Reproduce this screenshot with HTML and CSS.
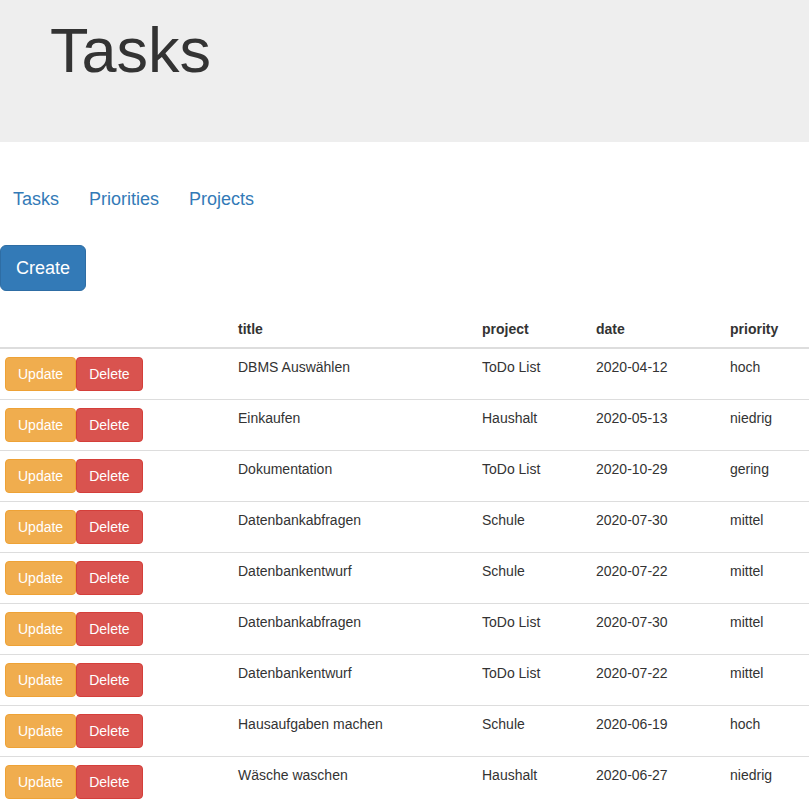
FILE: index.html
```html
<!DOCTYPE html>
<html lang="de">
<head>
<meta charset="utf-8">
<title>Tasks</title>
<link rel="stylesheet" href="styles.css">
</head>
<body>
<div class="jumbotron">
  <h1>Tasks</h1>
</div>
<nav class="nav">
  <a href="#">Tasks</a>
  <a href="#">Priorities</a>
  <a href="#">Projects</a>
</nav>
<div class="actions">
  <button class="btn btn-lg btn-primary">Create</button>
</div>
<table class="table">
  <colgroup>
    <col class="c-act"><col class="c-title"><col class="c-proj"><col class="c-date"><col class="c-prio">
  </colgroup>
  <thead>
    <tr><th></th><th>title</th><th>project</th><th>date</th><th>priority</th></tr>
  </thead>
  <tbody>
    <tr><td class="act"><div class="btns"><button class="btn btn-warning">Update</button><button class="btn btn-danger">Delete</button></div></td><td>DBMS Auswählen</td><td>ToDo List</td><td>2020-04-12</td><td>hoch</td></tr>
    <tr><td class="act"><div class="btns"><button class="btn btn-warning">Update</button><button class="btn btn-danger">Delete</button></div></td><td>Einkaufen</td><td>Haushalt</td><td>2020-05-13</td><td>niedrig</td></tr>
    <tr><td class="act"><div class="btns"><button class="btn btn-warning">Update</button><button class="btn btn-danger">Delete</button></div></td><td>Dokumentation</td><td>ToDo List</td><td>2020-10-29</td><td>gering</td></tr>
    <tr><td class="act"><div class="btns"><button class="btn btn-warning">Update</button><button class="btn btn-danger">Delete</button></div></td><td>Datenbankabfragen</td><td>Schule</td><td>2020-07-30</td><td>mittel</td></tr>
    <tr><td class="act"><div class="btns"><button class="btn btn-warning">Update</button><button class="btn btn-danger">Delete</button></div></td><td>Datenbankentwurf</td><td>Schule</td><td>2020-07-22</td><td>mittel</td></tr>
    <tr><td class="act"><div class="btns"><button class="btn btn-warning">Update</button><button class="btn btn-danger">Delete</button></div></td><td>Datenbankabfragen</td><td>ToDo List</td><td>2020-07-30</td><td>mittel</td></tr>
    <tr><td class="act"><div class="btns"><button class="btn btn-warning">Update</button><button class="btn btn-danger">Delete</button></div></td><td>Datenbankentwurf</td><td>ToDo List</td><td>2020-07-22</td><td>mittel</td></tr>
    <tr><td class="act"><div class="btns"><button class="btn btn-warning">Update</button><button class="btn btn-danger">Delete</button></div></td><td>Hausaufgaben machen</td><td>Schule</td><td>2020-06-19</td><td>hoch</td></tr>
    <tr><td class="act"><div class="btns"><button class="btn btn-warning">Update</button><button class="btn btn-danger">Delete</button></div></td><td>Wäsche waschen</td><td>Haushalt</td><td>2020-06-27</td><td>niedrig</td></tr>
  </tbody>
</table>
</body>
</html>
```

FILE: styles.css
```css
* { box-sizing: border-box; }
html, body { margin: 0; padding: 0; }
body {
  font-family: "Liberation Sans", Arial, sans-serif;
  font-size: 14px;
  line-height: 20px;
  color: #333;
  background: #fff;
  width: 809px;
  overflow: hidden;
}
.jumbotron {
  background: #eee;
  padding: 16px 50px 57px;
}
.jumbotron h1 {
  margin: 0;
  font-size: 63px;
  line-height: 69px;
  font-weight: 400;
  color: #333;
}
.nav {
  display: flex;
  gap: 30px;
  margin-top: 47px;
  padding-left: 13px;
}
.nav a {
  font-size: 18px;
  line-height: 20px;
  color: #337ab7;
  text-decoration: none;
}
.actions {
  margin-top: 36px;
  display: flex;
}
.btn {
  font-family: "Liberation Sans", Arial, sans-serif;
  display: inline-block;
  font-size: 14px;
  line-height: 20px;
  padding: 6px 12px;
  border: 1px solid transparent;
  border-radius: 4px;
  color: #fff;
  cursor: pointer;
  margin: 0;
}
.btn-lg {
  font-size: 18px;
  line-height: 24px;
  padding: 10px 15px;
  border-radius: 6px;
}
.btn-primary { background: #337ab7; border-color: #2e6da4; }
.btn-warning { background: #f0ad4e; border-color: #eea236; }
.btn-danger { background: #d9534f; border-color: #d43f3a; }
.table {
  margin-top: 20px;
  width: 809px;
  border-collapse: collapse;
  border-spacing: 0;
  table-layout: fixed;
}
.c-act { width: 230px; }
.c-title { width: 244px; }
.c-proj { width: 114px; }
.c-date { width: 134px; }
.c-prio { width: 87px; }
.table th {
  text-align: left;
  font-weight: 700;
  padding: 8px;
  line-height: 20px;
  border-bottom: 2px solid #ddd;
  vertical-align: bottom;
}
.table td {
  padding: 8px;
  line-height: 20px;
  vertical-align: top;
  border-top: 1px solid #ddd;
  white-space: nowrap;
}
.table td.act { padding-left: 5px; }
.btns { display: flex; gap: 0; }
```
